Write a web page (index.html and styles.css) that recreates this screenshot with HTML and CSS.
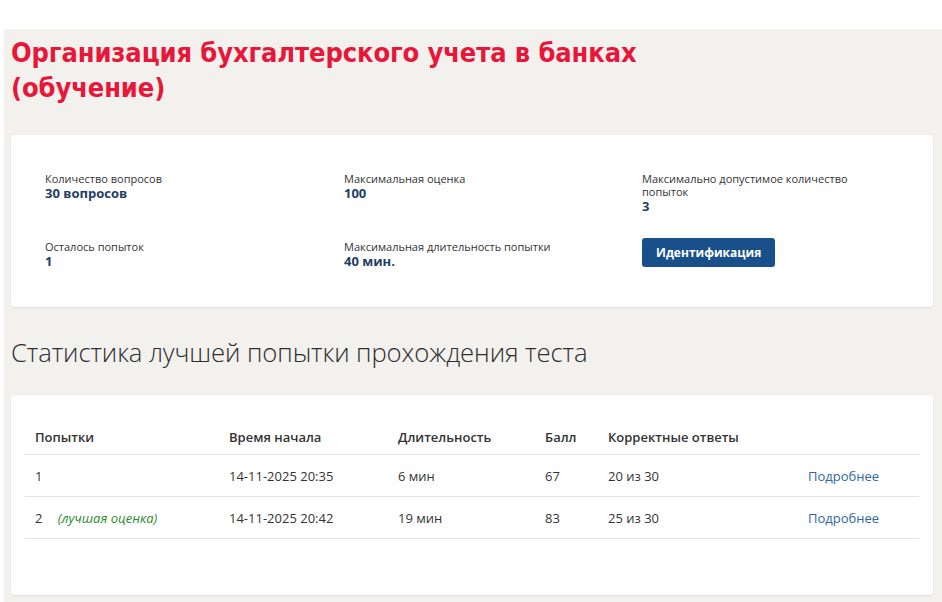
FILE: index.html
```html
<!DOCTYPE html>
<html lang="ru">
<head>
<meta charset="utf-8">
<title>Организация бухгалтерского учета в банках (обучение)</title>
<link rel="stylesheet" href="styles.css">
</head>
<body>
<div class="topbar"></div>
<main class="page">
  <h1 class="title">Организация бухгалтерского учета в банках<br>(обучение)</h1>

  <section class="card info">
    <div class="info-grid">
      <div class="field">
        <div class="label">Количество вопросов</div>
        <div class="value">30 вопросов</div>
      </div>
      <div class="field">
        <div class="label">Максимальная оценка</div>
        <div class="value">100</div>
      </div>
      <div class="field">
        <div class="label">Максимально допустимое количество<br>попыток</div>
        <div class="value">3</div>
      </div>
      <div class="field">
        <div class="label">Осталось попыток</div>
        <div class="value">1</div>
      </div>
      <div class="field">
        <div class="label">Максимальная длительность попытки</div>
        <div class="value">40 мин.</div>
      </div>
      <div class="field">
        <button class="btn" type="button">Идентификация</button>
      </div>
    </div>
  </section>

  <h2 class="section-title">Статистика лучшей попытки прохождения теста</h2>

  <section class="card stats">
    <table class="attempts">
      <thead>
        <tr>
          <th class="c-num">Попытки</th>
          <th class="c-start">Время начала</th>
          <th class="c-dur">Длительность</th>
          <th class="c-score">Балл</th>
          <th class="c-correct">Корректные ответы</th>
          <th class="c-link"></th>
        </tr>
      </thead>
      <tbody>
        <tr>
          <td>1</td>
          <td>14-11-2025 20:35</td>
          <td>6 мин</td>
          <td>67</td>
          <td>20 из 30</td>
          <td><a href="#" class="more">Подробнее</a></td>
        </tr>
        <tr>
          <td>2 <span class="best">(лучшая оценка)</span></td>
          <td>14-11-2025 20:42</td>
          <td>19 мин</td>
          <td>83</td>
          <td>25 из 30</td>
          <td><a href="#" class="more">Подробнее</a></td>
        </tr>
      </tbody>
    </table>
  </section>
</main>
</body>
</html>
```
FILE: styles.css
```css
html, body {
  margin: 0;
  padding: 0;
  background: #ffffff;
}

body {
  font-family: "Open Sans", "Noto Sans", sans-serif;
  color: #333333;
}

.topbar {
  height: 29px;
  background: #ffffff;
}

.page {
  margin-left: 4px;
  background: #f2f1ee;
  padding: 6px 9px 6px 7px;
  min-height: 561px;
}

.title {
  margin: 0;
  font-family: "DejaVu Sans Condensed", "DejaVu Sans", sans-serif;
  font-stretch: condensed;
  font-weight: bold;
  font-size: 27px;
  line-height: 35px;
  color: #e8173a;
  letter-spacing: -0.1px;
}

.card {
  background: #ffffff;
  border-radius: 4px;
  box-shadow: 0 1px 2px rgba(0, 0, 0, 0.08);
}

.info {
  margin-top: 30px;
  padding: 37px 34px 38px 34px;
}

.info-grid {
  display: grid;
  grid-template-columns: 299px 298px 1fr;
  row-gap: 26px;
}

.label {
  font-size: 11px;
  line-height: 13px;
  color: #333333;
}

.value {
  margin-top: 1px;
  font-size: 13px;
  line-height: 15px;
  font-weight: bold;
  color: #1e3e66;
}

.btn {
  margin-top: -6px;
  height: 29px;
  padding: 0 14px;
  border: none;
  border-radius: 3px;
  background: #1a5089;
  color: #ffffff;
  font-family: "Open Sans", "Noto Sans", sans-serif;
  font-weight: bold;
  font-size: 12px;
}

.section-title {
  margin: 29px 0 0 0;
  font-weight: 300;
  font-size: 25.7px;
  line-height: 34px;
  color: #2e2e2e;
  letter-spacing: -0.1px;
}

.stats {
  margin-top: 25px;
  padding: 28px 14px 56px 14px;
}

.attempts {
  width: 100%;
  border-collapse: collapse;
  font-size: 13px;
}

.attempts th {
  text-align: left;
  font-weight: 600;
  padding: 5px 10px 8px 10px;
  border-bottom: 1px solid #e4e3e0;
}

.attempts td {
  padding: 12px 10px 11px 10px;
  border-bottom: 1px solid #e4e3e0;
}

.c-num { width: 174px; }
.c-start { width: 149px; }
.c-dur { width: 127px; }
.c-score { width: 43px; }
.c-correct { width: 180px; }

.best {
  margin-left: 12px;
  font-style: italic;
  color: #2a8a2a;
  font-size: 13px;
}

.more {
  color: #2f68a3;
  text-decoration: none;
}
```
